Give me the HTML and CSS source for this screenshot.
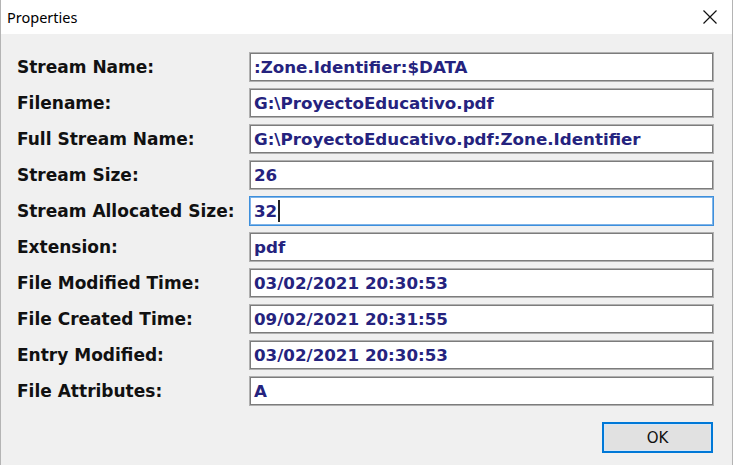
FILE: index.html
```html
<!DOCTYPE html>
<html>
<head>
<meta charset="utf-8">
<title>Properties</title>
<link rel="stylesheet" href="styles.css">
</head>
<body>
<div class="window">
  <div class="titlebar">
    <span class="title">Properties</span>
    <svg class="close" width="16" height="16" viewBox="0 0 16 16"><path d="M1.5 1.5 L14.5 14.5 M14.5 1.5 L1.5 14.5" stroke="#111" stroke-width="1.2" fill="none"/></svg>
  </div>
  <div class="content">
    <div class="grid">
      <div class="label">Stream Name:</div><div class="field">:Zone.Identifier:$DATA</div>
      <div class="label">Filename:</div><div class="field">G:\ProyectoEducativo.pdf</div>
      <div class="label">Full Stream Name:</div><div class="field">G:\ProyectoEducativo.pdf:Zone.Identifier</div>
      <div class="label">Stream Size:</div><div class="field">26</div>
      <div class="label">Stream Allocated Size:</div><div class="field focused">32<span class="caret"></span></div>
      <div class="label">Extension:</div><div class="field">pdf</div>
      <div class="label">File Modified Time:</div><div class="field">03/02/2021 20:30:53</div>
      <div class="label">File Created Time:</div><div class="field">09/02/2021 20:31:55</div>
      <div class="label">Entry Modified:</div><div class="field">03/02/2021 20:30:53</div>
      <div class="label">File Attributes:</div><div class="field">A</div>
    </div>
    <div class="actions">
      <button class="ok">OK</button>
    </div>
  </div>
</div>
</body>
</html>
```
FILE: styles.css
```css
* { box-sizing: border-box; }
html, body { margin: 0; padding: 0; }
body {
  width: 733px;
  height: 465px;
  overflow: hidden;
  background: #f0f0f0;
}
.window {
  width: 733px;
  height: 465px;
  display: flex;
  flex-direction: column;
  border-left: 1px solid #b4b4b4;
  border-right: 1px solid #b4b4b4;
  background: #f0f0f0;
}
.titlebar {
  height: 34px;
  background: #ffffff;
  display: flex;
  align-items: center;
  justify-content: space-between;
  padding: 0 14px 0 6px;
}
.title {
  font-family: "Noto Sans", "Liberation Sans", sans-serif;
  font-size: 14.5px;
  color: #000;
}
.close { display: block; }
.content {
  flex: 1;
  display: flex;
  flex-direction: column;
  padding: 18px 19px 0 16px;
}
.grid {
  display: grid;
  grid-template-columns: 232px 465px;
  grid-auto-rows: 30px;
  row-gap: 6px;
}
.label {
  font-family: "DejaVu Sans", sans-serif;
  font-weight: bold;
  font-size: 17px;
  color: #111;
  display: flex;
  align-items: center;
}
.field {
  background: #fff;
  border: 1px solid #b0b0b0;
  box-shadow: inset 0 0 0 1px #7c7c7c;
  font-family: "DejaVu Sans", sans-serif;
  font-weight: bold;
  font-size: 16.7px;
  color: #25237e;
  display: flex;
  align-items: center;
  padding-left: 4px;
  white-space: nowrap;
}
.field.focused {
  border: 1px solid #3d8fdc;
  box-shadow: inset 0 0 0 1px #7fb4e8;
}
.caret {
  display: inline-block;
  width: 1.5px;
  height: 22px;
  background: #222;
  margin-left: 1px;
}
.actions {
  display: flex;
  justify-content: flex-end;
  margin-top: 16px;
}
.ok {
  width: 111px;
  height: 31px;
  border: 2px solid #0078d7;
  background: #e1e1e1;
  box-shadow: inset 0 0 0 1px #d4e6f7;
  font-family: "DejaVu Sans", sans-serif;
  font-size: 15px;
  color: #111;
  padding: 0;
}
```
